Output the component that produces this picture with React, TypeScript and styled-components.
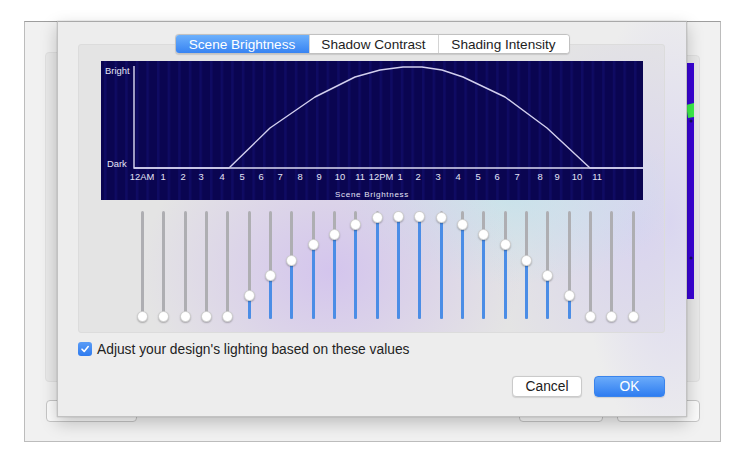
import React from 'react';
import styled, { createGlobalStyle } from 'styled-components';

// #region ====== style ===
const GlobalStyle = createGlobalStyle`
    html, body {
        margin: 0;
        padding: 0;
        background: #ffffff;
    }

    body {
        font-family: 'Liberation Sans', Arial, sans-serif;
        -webkit-font-smoothing: antialiased;
    }
`;

const Page = styled.div`
    width: 741px;
    height: 460px;
    padding: 21px 0 0 24px;
    box-sizing: border-box;
`;

const Window = styled.div`
    position: relative;
    width: 697px;
    height: 421px;
    box-sizing: border-box;
    border: 1px solid #bcbcbc;
    border-top-color: #9d9d9d;
    background: #f1f1f1;
    display: flex;
    flex-direction: column;
`;

const WindowBody = styled.div`
    display: flex;
    justify-content: space-between;
    align-items: flex-start;
    padding: 30px 20px 0 20px;
`;

const SidePanel = styled.div<{ $offset?: number }>`
    width: 160px;
    height: ${p => 330 - (p.$offset || 0)}px;
    margin-top: ${p => p.$offset || 0}px;
    box-sizing: border-box;
    border: 1px solid #e0e0e0;
    border-radius: 4px;
    background: #e9e9e9;
    display: flex;
    justify-content: flex-end;
    padding: 7px 5px 0 0;
`;

const WindowFooter = styled.div`
    display: flex;
    align-items: center;
    gap: 14px;
    padding: 18px 20px 0 21px;
`;

const GhostButton = styled.div<{ $w: number }>`
    width: ${p => p.$w}px;
    height: 22px;
    box-sizing: border-box;
    border: 1px solid #c6c6c6;
    border-radius: 4px;
    background: #fbfbfb;

    &:first-child {
        margin-right: auto;
    }
`;

const Sheet = styled.div`
    position: absolute;
    left: 32px;
    top: -1px;
    width: 630px;
    height: 396px;
    box-sizing: border-box;
    border: 1px solid #c2c2c2;
    border-top-color: #a9a9a9;
    background:
        radial-gradient(ellipse 90px 230px at 612px 200px, rgba(214, 210, 240, 0.85), rgba(214, 210, 240, 0)),
        #ededed;
    box-shadow: 0 6px 16px rgba(0, 0, 0, 0.22), 0 0 1px rgba(0, 0, 0, 0.3);
    display: flex;
    flex-direction: column;
    padding: 12px 20px 0 20px;
`;

const TabBar = styled.div`
    position: relative;
    z-index: 1;
    align-self: center;
    display: flex;
    height: 18px;
    margin-bottom: -10px;
    border: 1px solid #c1c1c1;
    border-radius: 4px;
    background: #ffffff;
    overflow: hidden;
    box-shadow: 0 0.5px 1px rgba(0, 0, 0, 0.12);
`;

const Tab = styled.div<{ $active?: boolean; $w: number }>`
    width: ${p => p.$w}px;
    display: flex;
    align-items: center;
    justify-content: center;
    font-size: 13.6px;
    color: ${p => (p.$active ? '#ffffff' : '#1d1d1d')};
    background: ${p => (p.$active ? 'linear-gradient(#6db0fb, #3783f2)' : '#ffffff')};
    border-left: 1px solid ${p => (p.$active ? 'transparent' : '#d4d4d4')};

    &:first-child {
        border-left: 0;
    }
`;

const Panel = styled.div`
    width: 587px;
    height: 289px;
    box-sizing: border-box;
    border: 1px solid #dcdcdc;
    border-radius: 3px;
    background:
        radial-gradient(ellipse 190px 150px at 252px 226px, rgba(206, 186, 240, 0.75), rgba(206, 186, 240, 0)),
        radial-gradient(ellipse 170px 90px at 430px 150px, rgba(192, 226, 236, 0.75), rgba(192, 226, 236, 0)),
        radial-gradient(ellipse 150px 210px at 560px 180px, rgba(214, 208, 242, 0.8), rgba(214, 208, 242, 0)),
        #e4e4e4;
    padding: 16px 0 0 22px;
`;

const ChartBox = styled.div`
    width: 542px;
    height: 139px;
    background: #0a0551;
`;

const SliderBank = styled.div`
    display: grid;
    grid-template-columns: repeat(24, 21.33px);
    height: 112px;
    margin: 11px 0 0 31px;
`;

const SliderCell = styled.div`
    display: flex;
    justify-content: center;
`;

const Track = styled.div`
    position: relative;
    width: 3px;
    height: 108px;
    border-radius: 1.5px;
    background: #aeaeb2;
`;

const Fill = styled.div`
    position: absolute;
    left: 0;
    right: 0;
    bottom: 0;
    border-radius: 1.5px;
    background: #4b8de6;
`;

const Knob = styled.div`
    position: absolute;
    left: -4px;
    width: 11px;
    height: 11px;
    box-sizing: border-box;
    border-radius: 50%;
    background: #ffffff;
    border: 0.5px solid rgba(0, 0, 0, 0.18);
    box-shadow: 0 1px 1.5px rgba(0, 0, 0, 0.25);
`;

const CheckRow = styled.label`
    display: flex;
    align-items: center;
    gap: 5px;
    margin-top: 9px;
    height: 14px;
    font-size: 13.8px;
    color: #232323;
`;

const CheckBox = styled.span`
    width: 14px;
    height: 14px;
    border-radius: 3px;
    background: linear-gradient(#5a9cf6, #2f7bef);
    display: flex;
    align-items: center;
    justify-content: center;
`;

const ButtonRow = styled.div`
    display: flex;
    justify-content: flex-end;
    gap: 12px;
    margin-top: 20px;
    padding-right: 1px;
`;

const Button = styled.div<{ $primary?: boolean }>`
    width: ${p => (p.$primary ? 71 : 70)}px;
    height: 21px;
    box-sizing: border-box;
    display: flex;
    align-items: center;
    justify-content: center;
    border-radius: 4px;
    font-size: 13.8px;
    color: ${p => (p.$primary ? '#ffffff' : '#202020')};
    background: ${p => (p.$primary ? 'linear-gradient(#6aabfa, #2f7df1)' : '#ffffff')};
    border: 1px solid ${p => (p.$primary ? '#3a84ec' : '#cacaca')};
    box-shadow: 0 0.5px 1px rgba(0, 0, 0, 0.12);
`;
// #endregion === style ===

const hours = [
    { label: '12AM', x: 41 },
    { label: '1', x: 62 },
    { label: '2', x: 82 },
    { label: '3', x: 100 },
    { label: '4', x: 121 },
    { label: '5', x: 141 },
    { label: '6', x: 160 },
    { label: '7', x: 179 },
    { label: '8', x: 199 },
    { label: '9', x: 218 },
    { label: '10', x: 239 },
    { label: '11', x: 259 },
    { label: '12PM', x: 280 },
    { label: '1', x: 299 },
    { label: '2', x: 317 },
    { label: '3', x: 337 },
    { label: '4', x: 357 },
    { label: '5', x: 377 },
    { label: '6', x: 396 },
    { label: '7', x: 416 },
    { label: '8', x: 439 },
    { label: '9', x: 456 },
    { label: '10', x: 476 },
    { label: '11', x: 496 },
];

const curve = [
    [33, 107],
    [128, 107],
    [169, 67],
    [214, 36],
    [254, 16],
    [279, 9],
    [302, 6],
    [321, 6],
    [341, 9],
    [362, 16],
    [404, 36],
    [446, 67],
    [489, 107],
    [542, 107],
];

const levels = [
    0, 0, 0, 0, 0, 0.21, 0.41, 0.56, 0.72, 0.82, 0.92, 0.99, 1, 1, 0.99, 0.92, 0.82, 0.72, 0.56, 0.41,
    0.21, 0, 0, 0,
];

const labelStyle = { fontFamily: "'Liberation Sans', Arial, sans-serif" };

const BrightnessChart: React.FC = () => (
    <svg height={139} viewBox="0 0 542 139" width={542}>
        <defs>
            <pattern height={139} id="stripes" patternUnits="userSpaceOnUse" width={10.6} x={3}>
                <rect fill="#16117a" height={139} opacity={0.45} width={2.5} x={0} />
            </pattern>
        </defs>
        <rect fill="url(#stripes)" height={139} width={542} />
        <g fill="#e4e4f6" fontSize={9.4} style={labelStyle}>
            <text x={4} y={13}>
                Bright
            </text>
            <text x={6} y={106}>
                Dark
            </text>
            {hours.map((h, i) => (
                <text key={i} textAnchor="middle" x={h.x} y={119}>
                    {h.label}
                </text>
            ))}
            <text fontSize={8} letterSpacing={0.7} textAnchor="middle" x={271} y={136}>
                Scene Brightness
            </text>
        </g>
        <polyline fill="none" points="33,5 33,107 542,107" stroke="#dcdaf2" strokeWidth={1.4} />
        <polyline
            fill="none"
            points={curve.map(p => p.join(',')).join(' ')}
            stroke="#d2cfee"
            strokeLinejoin="round"
            strokeWidth={1.4}
        />
    </svg>
);

const LightSlider: React.FC<{ value: number }> = ({ value }) => {
    const center = 5 + (1 - value) * 100;
    return (
        <SliderCell>
            <Track>
                <Fill style={{ height: 108 - center }} />
                <Knob style={{ top: center - 5.5 }} />
            </Track>
        </SliderCell>
    );
};

const PreviewStrip: React.FC = () => (
    <svg height={236} viewBox="0 0 120 236" width={120}>
        <rect fill="#3a05d6" height={236} width={120} />
        <path d="M112 42 L120 40 L120 54 L114 55 Z" fill="#3cf04a" />
        <circle cx={117} cy={58} fill="#14105a" r={1.5} />
        <circle cx={117} cy={195} fill="#14105a" r={1.5} />
    </svg>
);

const App: React.FC = () => (
    <>
        <GlobalStyle />
        <Page>
            <Window>
                <WindowBody>
                    <SidePanel />
                    <SidePanel $offset={3}>
                        <PreviewStrip />
                    </SidePanel>
                </WindowBody>
                <WindowFooter>
                    <GhostButton $w={91} />
                    <GhostButton $w={84} />
                    <GhostButton $w={83} />
                </WindowFooter>

                <Sheet>
                    <TabBar>
                        <Tab $active $w={133}>
                            Scene Brightness
                        </Tab>
                        <Tab $w={128}>Shadow Contrast</Tab>
                        <Tab $w={130}>Shading Intensity</Tab>
                    </TabBar>
                    <Panel>
                        <ChartBox>
                            <BrightnessChart />
                        </ChartBox>
                        <SliderBank>
                            {levels.map((v, i) => (
                                <LightSlider key={i} value={v} />
                            ))}
                        </SliderBank>
                    </Panel>
                    <CheckRow>
                        <CheckBox>
                            <svg height={10} viewBox="0 0 10 10" width={10}>
                                <polyline
                                    fill="none"
                                    points="2,5.2 4.2,7.4 8.2,2.6"
                                    stroke="#ffffff"
                                    strokeLinecap="round"
                                    strokeLinejoin="round"
                                    strokeWidth={1.6}
                                />
                            </svg>
                        </CheckBox>
                        Adjust your design's lighting based on these values
                    </CheckRow>
                    <ButtonRow>
                        <Button>Cancel</Button>
                        <Button $primary>OK</Button>
                    </ButtonRow>
                </Sheet>
            </Window>
        </Page>
    </>
);

export default App;
